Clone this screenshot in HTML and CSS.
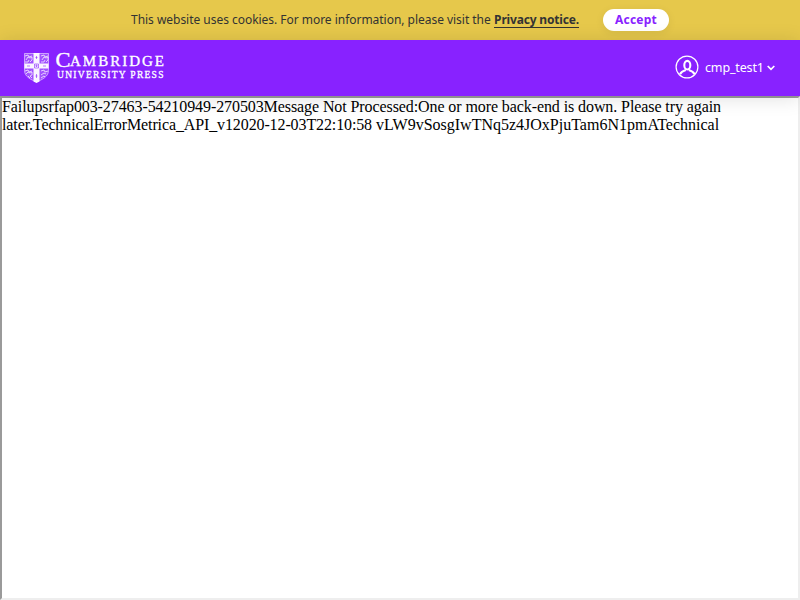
FILE: index.html
```html
<!DOCTYPE html>
<html lang="en">
<head>
<meta charset="utf-8">
<title>Cambridge University Press</title>
<link rel="stylesheet" href="styles.css">
</head>
<body>
<div class="cookie">
  <p class="cookie-text"><span class="cookie-message">This website uses cookies. For more information, please visit the</span> <a class="notice">Privacy notice.</a></p>
  <button class="accept">Accept</button>
</div>
<header class="header">
  <svg class="logo" width="142" height="32" viewBox="0 0 142 32">
    <path d="M0.5 1.500h24v17c0 6-6 9-12 11.500c-6-2.500-12-5.500-12-11.500z" fill="#fff" fill-opacity=".22" stroke="#fff" stroke-opacity=".65" stroke-width=".8"/>
    <path d="M9.500 1h6v10.500h9v5h-9v13l-3 1.500-3-1.500v-13h-9v-5h9z" fill="#fff" fill-opacity=".95"/>
    <g fill="none" stroke="#fff" stroke-width="1" stroke-opacity=".7">
      <path d="M1 4l3-1 1 2 3-1M2 8l2-3 2 1 2-1v3l-2 2M1 10h3l1-2"/>
      <path d="M17 4l3-1 1 2 3-1M18 8l2-3 2 1 2-1v3l-2 2M17 10h3l1-2"/>
      <path d="M1 19l3-1 1 2 3-1M2 22l2-2 2 1 2-1v3l-2 1 2 2M4 24l2 2"/>
      <path d="M17 19l3-1 1 2 3-1M17 23l3-2 2 1M17 26l3-2 1 1"/>
    </g>
    <g fill="none" stroke="#8822ff" stroke-opacity=".65" stroke-width=".9">
      <path d="M10.500 12h4v4h-4zM12.500 4v3M11.500 5.500h2M12.500 22v4M11.500 24h2M3 14h3M19 14h3M12 13h1v1.500h-1z"/>
    </g>
    <text class="logo-name" x="31.500" y="15" font-size="21" textLength="15" lengthAdjust="spacingAndGlyphs">C</text>
    <text class="logo-name" x="46" y="14" font-size="15" textLength="94" lengthAdjust="spacing">AMBRIDGE</text>
    <text class="logo-sub" x="33" y="25.500" textLength="106.500" lengthAdjust="spacing">UNIVERSITY PRESS</text>
  </svg>
  <div class="user">
    <svg class="avatar" width="24" height="24" viewBox="0 0 24 24" fill="none" stroke="#fff">
      <circle cx="12" cy="12" r="10.900" stroke-width="1.200"/>
      <ellipse cx="12.300" cy="10.200" rx="3" ry="4.300" stroke-width="2.100"/>
      <path d="M5 19.300c1.300-2.500 3.200-3.300 5.800-4.200M19.600 19.300c-1.300-2.500-3.200-3.300-5.800-4.200" stroke-width="2.100"/>
    </svg>
    <span class="username">cmp_test1</span>
    <svg class="chevron" width="8" height="6" viewBox="0 0 8 6" fill="none" stroke="#fff" stroke-width="1.700"><path d="M.7 1l3.300 3.300L7.300 1"/></svg>
  </div>
</header>
<main class="frame">Failupsrfap003-27463-54210949-270503Message Not Processed:One or more back-end is down. Please try again <span class="origin">later.TechnicalErrorMetrica_API_v12020-12-03T22:10:58</span> <span class="token">vLW9vSosgIwTNq5z4JOxPjuTam6N1pmATechnical</span></main>
</body>
</html>
```
FILE: styles.css
```css
* { box-sizing: border-box; }
body {
  margin: 0;
  height: 600px;
  display: flex;
  flex-direction: column;
  overflow: hidden;
  background: #fff;
  font-family: "Noto Sans", sans-serif;
}
.cookie {
  height: 40px;
  flex: none;
  display: flex;
  align-items: center;
  justify-content: center;
  gap: 24px;
  background: #e6c84b;
  color: #333;
  font-size: 12px;
}
.cookie-text {
  margin: 0;
  width: 448px;
  display: flex;
  justify-content: space-between;
  line-height: 16px;
  white-space: nowrap;
}
.cookie-message { letter-spacing: -0.03px; }
.notice {
  font-weight: 700;
  height: 16px;
  border-bottom: 1px solid #333;
  letter-spacing: -0.17px;
}
.accept {
  width: 66px;
  height: 22px;
  padding: 0;
  border: 0;
  border-radius: 11px;
  background: #fff;
  color: #8822ff;
  font: 700 12px/20px "Noto Sans", sans-serif;
  letter-spacing: 0.25px;
  box-shadow: 0 2px 10px rgba(0, 0, 0, .07);
}
.header {
  position: relative;
  z-index: 1;
  height: 56px;
  flex: none;
  display: flex;
  align-items: center;
  justify-content: space-between;
  padding: 0 25px 0 24px;
  background: #8822ff;
  box-shadow: 0 2px 20px rgba(0, 0, 0, .13);
}
.logo { overflow: visible; }
.logo-name, .logo-sub {
  fill: #fff;
  font-family: "Liberation Serif", serif;
}
.logo-name { stroke: #fff; stroke-width: .35px; }
.logo-sub { font-size: 9.5px; font-weight: 400; stroke: #fff; stroke-width: .3px; }
.user {
  display: flex;
  align-items: center;
  color: #fff;
  font-size: 12.5px;
}
.avatar { margin: -2px 6px 0 0; }
.username { width: 59px; margin-top: -2px; letter-spacing: -0.15px; white-space: nowrap; }
.chevron { margin-left: 3px; }
.frame {
  flex: 1;
  border: 2px solid;
  border-color: #9a9a9a #eee #eee #9a9a9a;
  font: 16px/18px "Liberation Serif", serif;
  letter-spacing: -0.09px;
  color: #000;
}
.origin { letter-spacing: -0.115px; }
.token { letter-spacing: 0; }
```
